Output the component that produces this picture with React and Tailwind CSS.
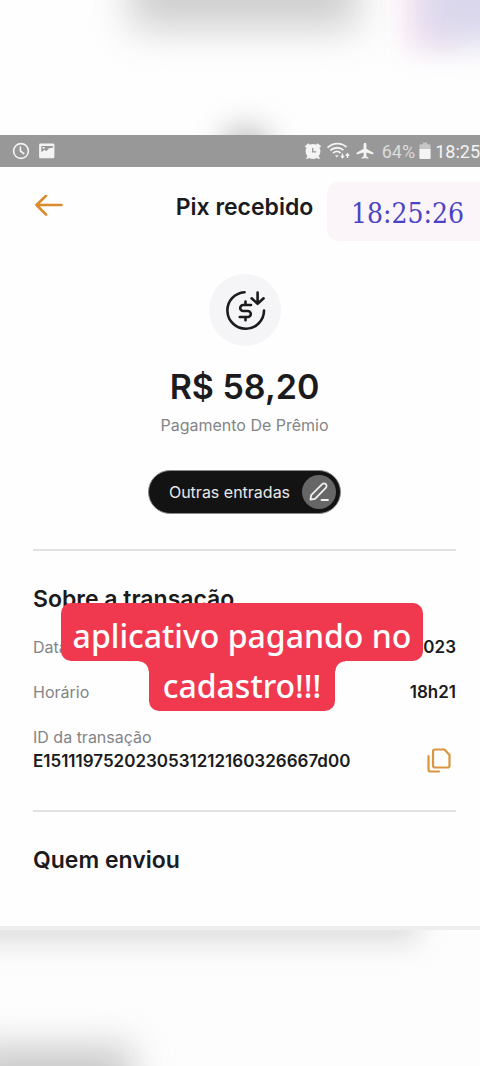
import React from 'react';

const details = [
  { label: 'Data', value: '31/05/2023' },
  { label: 'Horário', value: '18h21' },
];

const TopBackdrop = () => (
  <div className="relative h-[135px] shrink-0 overflow-hidden bg-[#fefefe]" aria-hidden="true">
    <div className="absolute -top-10 left-[130px] h-[68px] w-[228px] bg-[#cdcdcd] blur-[20px]" />
    <div className="absolute -top-12 right-[20px] h-24 w-[56px] bg-[#fbe8f4] blur-[14px]" />
    <div className="absolute -top-12 -right-12 h-[92px] w-[108px] bg-[#dad7ec] blur-[16px]" />
    <div className="absolute top-[128px] left-[222px] h-12 w-12 rounded-full bg-[#b4b4b4] blur-[16px]" />
  </div>
);

const BottomBackdrop = () => (
  <div className="relative min-h-[140px] flex-1 overflow-hidden bg-[#fdfdfd]" aria-hidden="true">
    <div className="absolute -top-4 -left-8 h-8 w-[450px] bg-[#dcdbdb] blur-[14px]" />
    <div className="absolute top-0 right-0 left-0 h-1 bg-[#efeeef]" />
    <div className="absolute top-[120px] -left-8 h-20 w-[164px] bg-[#cacaca] blur-[18px]" />
  </div>
);

const StatusBar = () => (
  <div className="flex h-8 shrink-0 items-center justify-between bg-[#989898] pl-3 font-['Roboto',sans-serif] text-[18px] text-[#f4f4f4]">
    <div className="flex items-center gap-2">
      <svg className="size-[18px]" viewBox="0 0 18 18" fill="none" stroke="currentColor" strokeWidth="1.6">
        <circle cx="9" cy="9" r="7.4" />
        <path d="M8.4 4.5V9l3.8 3" />
      </svg>
      <svg className="size-[18px]" viewBox="0 0 18 18" fill="currentColor" fillRule="evenodd">
        <path d="M2.500 1.500h12.500a1.400 1.400 0 0 1 1.400 1.400v12a1.400 1.400 0 0 1-1.400 1.400H2.500a1.400 1.400 0 0 1-1.400-1.400v-12A1.400 1.400 0 0 1 2.500 1.500Zm.8 2.400v6.300l3-2.200 2.200 1 2.600-2.800 3.800-.4V3.900H3.300Zm1.300 1.200h2.200v1.500H4.600V5.100Z" />
      </svg>
    </div>
    <div className="flex items-center gap-1">
      <svg className="size-[18px]" viewBox="0 0 18 18">
        <g fill="currentColor">
          <circle cx="9" cy="9.500" r="7.400" />
          <path d="M.8 4.200 4.400 1.200 6 2.800 2.400 6zM17.200 4.200l-3.600-3L12 2.800 15.600 6zM1.800 16.800l2-3 2 1.200-1.600 1.800zM16.200 16.800l-2-3-2 1.200 1.600 1.800z" />
        </g>
        <path d="M8.700 6v3.900h3.500" fill="none" stroke="#989898" strokeWidth="1.300" />
      </svg>
      <svg className="h-[18px] w-[26px]" viewBox="0 0 26 18" fill="none" stroke="currentColor" strokeWidth="1.800">
        <path d="M1.500 5.600C7.500.4 15.500.4 20.500 5.200M4.200 8.400c4.200-3.500 9.600-3.500 13.200-.2M7 11c2.600-2 5.500-2 7.600.2" />
        <path d="M9 13.200h3.600l-1.800 2.200z" fill="currentColor" stroke="none" />
        <path d="M16.500 11.500v4m-1.600-1.600 1.600 1.900 1.600-1.900M21.500 16v-4m-1.700 1.700 1.700-1.900 1.700 1.900" strokeWidth="1.300" />
      </svg>
      <svg className="size-[18px]" viewBox="0 0 18 18" fill="currentColor">
        <path d="M9 .8c.9 0 1.400.8 1.400 1.700v4.300l7 4v1.700l-7-2.100v3.900l2 1.400v1.100L9 16l-3.400.8v-1.100l2-1.400v-3.900l-7 2.100v-1.700l7-4V2.500C7.600 1.600 8.100.8 9 .8Z" />
      </svg>
      <span className="ml-1 text-[#dcdcdc]">64%</span>
      <svg className="h-[18px] w-3" viewBox="0 0 12 18">
        <path d="M4 .5h4v1.800h2.400c.6 0 1.100.5 1.100 1.100v12.500c0 .6-.5 1.100-1.100 1.100H1.600c-.6 0-1.100-.5-1.100-1.100V3.400c0-.6.500-1.100 1.100-1.100H4z" fill="#c6c6c6" />
        <path d="M.5 7h11v8.900c0 .6-.5 1.100-1.100 1.100H1.600c-.6 0-1.100-.5-1.100-1.100z" fill="#f4f4f4" />
      </svg>
      <span>18:25</span>
    </div>
  </div>
);

const Caption = () => (
  <div className="flex flex-col items-center pl-1 font-['Noto_Sans',sans-serif] text-[32px] leading-[50px] font-medium whitespace-nowrap text-white">
    <p className="relative z-10 rounded-[10px] bg-[#f0394f] px-3 pt-2">aplicativo pagando no</p>
    <div className="flex items-start">
      <span className="size-[10px] bg-[radial-gradient(circle_at_0_100%,transparent_9px,#f0394f_10px)]" />
      <p className="-mt-2 rounded-b-[10px] bg-[#f0394f] px-[14px] pt-2">cadastro!!!</p>
      <span className="size-[10px] bg-[radial-gradient(circle_at_100%_100%,transparent_9px,#f0394f_10px)]" />
    </div>
  </div>
);

export default function App() {
  return (
    <div className="flex min-h-screen flex-col overflow-x-hidden bg-[#fefefe] font-['Inter',sans-serif] text-[#1b1b1d]">
      <TopBackdrop />
      <StatusBar />

      <main className="bg-[#fefefe] pb-[52px]">
        <header className="relative grid h-20 grid-cols-[1fr_auto_1fr] items-center pr-6 pl-[33px]">
          <button type="button" aria-label="Voltar" className="justify-self-start text-[#dd8a2c]">
            <svg className="h-6 w-8" viewBox="0 0 32 24" fill="none" stroke="currentColor" strokeWidth="2.600" strokeLinecap="round" strokeLinejoin="round">
              <path d="M28.500 10H3.500M13 0.800 3.500 10l9.500 9.500" />
            </svg>
          </button>
          <h1 className="text-[23px] font-semibold">Pix recebido</h1>
          <time className="absolute top-[15px] right-0 flex h-[59px] w-[153px] items-center rounded-l-xl bg-[#fbf4f8] pt-1 pl-6 font-['DejaVu_Serif_Condensed','DejaVu_Serif',serif] text-[28px] text-[#4a44c4]">
            18:25:26
          </time>
        </header>

        <section className="mt-[27px] flex flex-col items-center pr-6 pl-[33px]">
          <div className="flex size-[72px] items-center justify-center rounded-full bg-[#f5f5f7]">
            <svg className="size-[44px]" viewBox="0 0 44 44" fill="none" stroke="#1b1b1d" strokeWidth="2.600" strokeLinecap="round" strokeLinejoin="round">
              <path d="M21.500 4.200A18.300 18.300 0 1 0 41 22.500" />
              <path d="M34.600 4.500v11.300M28.600 10.300l6 5.500 6-5.500" />
              <path d="M28 17h-7.800a3 3 0 0 0 0 6h4.600a3 3 0 0 1 0 6H16.800M22.500 13.500V17M22.500 29v3.200" />
            </svg>
          </div>
          <p className="mt-[21px] text-[34px] leading-10 font-semibold">R$ 58,20</p>
          <p className="mt-[6px] text-base leading-6 text-[#848486]">Pagamento De Prêmio</p>
          <button type="button" className="mt-[33px] flex h-11 items-center gap-3 rounded-full border border-[#8a8a8a] bg-[#131314] pr-1 pl-5 text-base text-[#e8e8e8]">
            Outras entradas
            <span className="flex size-[34px] items-center justify-center rounded-full bg-[#666667]">
              <svg className="size-5" viewBox="0 0 20 20" fill="none" stroke="#f0f0f0" strokeWidth="1.800" strokeLinecap="round" strokeLinejoin="round">
                <path d="M1.500 17.500l.7-4.300L13.200 2.200a2.500 2.500 0 0 1 3.600 3.600L6 16.800z" />
                <path d="M12.500 18h6.500" />
              </svg>
            </span>
          </button>
        </section>

        <section className="relative mt-[35px]">
          <div className="pr-6 pl-[33px]">
            <hr className="border-t-2 border-[#e2e2e2]" />
            <h2 className="mt-[34px] text-[23px] leading-7 font-semibold">Sobre a transação</h2>
            <dl className="mt-[22px] flex flex-col gap-[21px] text-base leading-6">
              {details.map(({ label, value }) => (
                <div key={label} className="flex justify-between">
                  <dt className="text-[#848486]">{label}</dt>
                  <dd className="text-[17px] font-semibold">{value}</dd>
                </div>
              ))}
              <div className="flex items-end justify-between">
                <div>
                  <dt className="text-[#848486]">ID da transação</dt>
                  <dd className="text-[17px] font-semibold">E1511197520230531212160326667d00</dd>
                </div>
                <button type="button" aria-label="Copiar ID da transação" className="mr-1 text-[#d9963f]">
                  <svg className="size-[26px]" viewBox="0 0 26 26" fill="none" stroke="currentColor" strokeWidth="2.200" strokeLinecap="round" strokeLinejoin="round">
                    <path d="M9 2.500h9.500l5 5.500v10.500a2 2 0 0 1-2 2H9a2 2 0 0 1-2-2v-14a2 2 0 0 1 2-2Z" />
                    <path d="M2.500 9v13.500a2 2 0 0 0 2 2H13" />
                  </svg>
                </button>
              </div>
            </dl>
          </div>
          <div className="absolute inset-x-0 top-[54px]">
            <Caption />
          </div>
        </section>

        <section className="mt-[37px] pr-6 pl-[33px]">
          <hr className="border-t-2 border-[#e2e2e2]" />
          <h2 className="mt-[34px] text-[23px] leading-7 font-semibold">Quem enviou</h2>
        </section>
      </main>

      <BottomBackdrop />
    </div>
  );
}
